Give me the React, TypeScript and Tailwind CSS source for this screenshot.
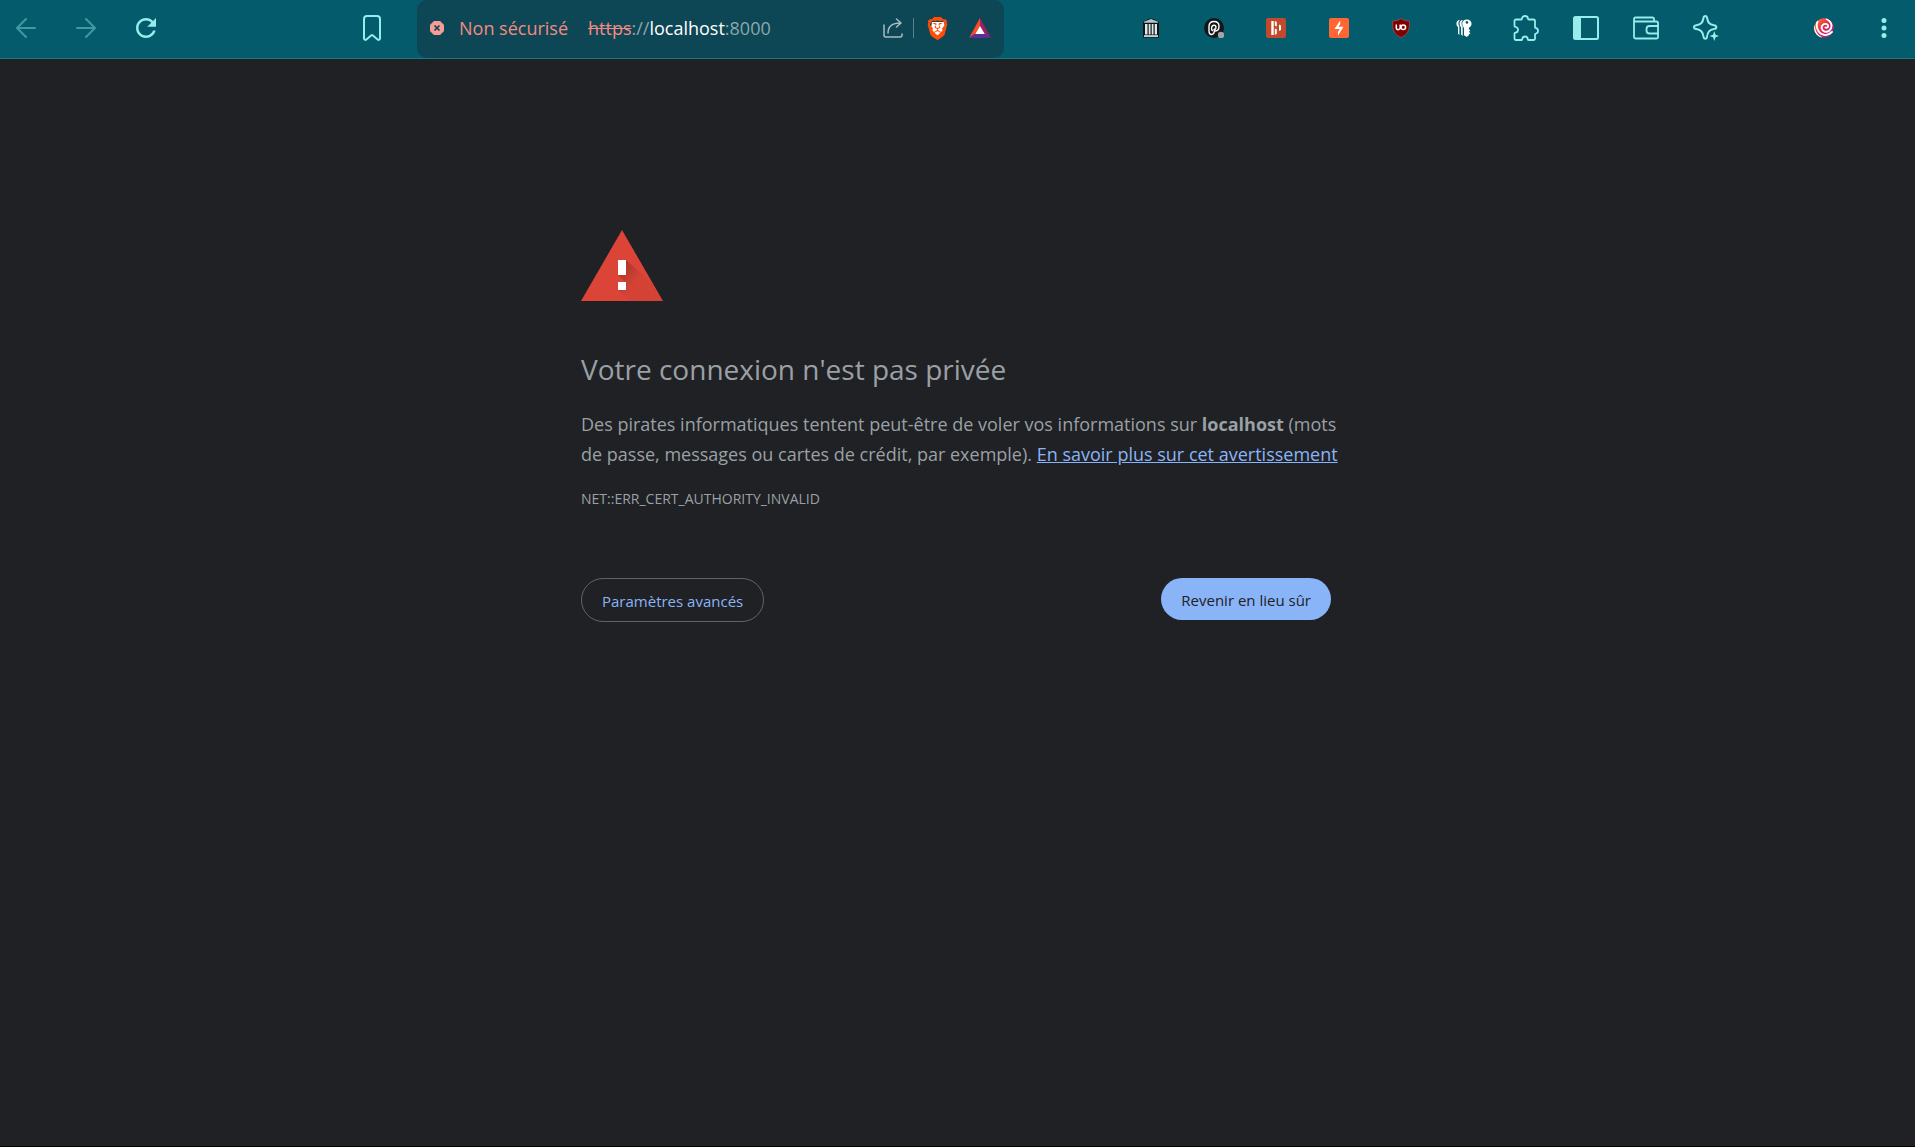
import type { ReactNode } from 'react';
import { SiBrave } from 'react-icons/si';

function ToolButton({ label, children, dim }: { label: string; children: ReactNode; dim?: boolean }) {
  return (
    <button
      type="button"
      aria-label={label}
      disabled={dim}
      className={
        dim
          ? 'flex h-10 w-[52px] shrink-0 items-center justify-center text-[#4199a4]'
          : 'flex h-10 w-[52px] shrink-0 items-center justify-center text-[#98ecec]'
      }
    >
      {children}
    </button>
  );
}

const line = {
  fill: 'none',
  stroke: 'currentColor',
  strokeWidth: 2,
  strokeLinecap: 'round',
  strokeLinejoin: 'round',
} as const;

const BackIcon = () => (
  <svg width="20" height="20" viewBox="0 0 20 20" {...line}>
    <path d="M19 10H1.500M10 1L1 10l9 9" />
  </svg>
);

const ForwardIcon = () => (
  <svg width="20" height="20" viewBox="0 0 20 20" {...line}>
    <path d="M1 10h17.500M10 1l9 9-9 9" />
  </svg>
);

const ReloadIcon = () => (
  <svg width="20" height="20" viewBox="4 4 16 16" fill="currentColor">
    <path d="M17.650 6.350C16.200 4.900 14.210 4 12 4c-4.420 0-7.990 3.580-7.990 8s3.570 8 7.990 8c3.730 0 6.840-2.550 7.730-6h-2.080c-.82 2.330-3.040 4-5.650 4-3.310 0-6-2.690-6-6s2.690-6 6-6c1.660 0 3.140.69 4.220 1.780L13 11h7V4l-2.350 2.350z" />
  </svg>
);

const BookmarkIcon = () => (
  <svg width="18" height="26" viewBox="0 0 18 26" {...line}>
    <path d="M4 1h10a3 3 0 0 1 3 3v19.300c0 1.400-1.300 2-2.400 1.200L9.600 20.300a1 1 0 0 0-1.200 0L3.400 24.500C2.300 25.300 1 24.700 1 23.300V4a3 3 0 0 1 3-3z" />
  </svg>
);

const DangerIcon = () => (
  <svg width="14" height="14" viewBox="0 0 14 14">
    <path d="M4.200 0h5.600L14 4.200v5.600L9.800 14H4.200L0 9.800V4.200z" fill="#f69d97" stroke="#f69d97" strokeLinejoin="round" strokeWidth="0.5" />
    <path d="M4.500 4.500l5 5M9.500 4.500l-5 5" stroke="#0d4655" strokeWidth="1.700" />
  </svg>
);

const ShareIcon = () => (
  <svg width="20" height="20" viewBox="0 0 20 20" fill="none" stroke="#a9bcc0" strokeWidth="1.500" strokeLinecap="round" strokeLinejoin="round">
    <path d="M1 7v10a2 2 0 0 0 2 2h14a2 2 0 0 0 2-2v-1" />
    <path d="M5 15C5 9 9 5 17.500 5M13.500 1l4.500 4-4.500 4" />
  </svg>
);

const BraveIcon = () => (
  <span className="grid place-items-center">
    <svg className="col-start-1 row-start-1" width="16" height="18" viewBox="0 0 16 18">
      <path d="M2 3l12 0 1 6-3 6-4 2.500L4 15 1 9z" fill="#fff" />
    </svg>
    <SiBrave className="col-start-1 row-start-1" size={23} color="#ff4d06" />
  </span>
);

const BatIcon = () => (
  <svg width="22" height="20" viewBox="0 0 22 20">
    <path d="M11 0v8.500L6 16l-6 4z" fill="#ff4a22" />
    <path d="M11 0l11 20-6-4-5-7.500z" fill="#9e1f63" />
    <path d="M0 20l6-4.500h10L22 20z" fill="#5d2f92" />
    <path d="M11 8l4.800 8H6.200z" fill="#fff" />
  </svg>
);

const MuseumIcon = () => (
  <svg width="18" height="20" viewBox="0 0 18 20">
    <path d="M1 4L6 1.200Q9 0 12 1.200L17 4v15.500H1z" fill="#0b1417" />
    <path d="M2 3.800L9 1l7 2.800v1H2z" fill="#b9c6c9" />
    <path d="M3 6h2.500v10.500H3zM6.700 6h1.800v10.500H6.700zM9.700 6h1.800v10.500H9.700zM12.700 6H15v10.500h-2.300z" fill="#dfe7e8" />
    <path d="M2 17.300h14v1.500H2z" fill="#fff" />
  </svg>
);

const SpiralIcon = () => (
  <svg width="20" height="20" viewBox="0 0 20 20">
    <circle cx="10" cy="10" r="10" fill="#14171a" />
    <path
      d="M8.500 12.500c-1.600-.8-1.300-5.300 1.500-5.300 2.600 0 2.600 4.300 0 4.300M10.500 11.500c0 3.500-1.300 5-3 5S5 15 5 12.500V8.500C5 5.500 7 3.500 10 3.500s5 2 5 4.800-1.600 4.700-3.700 4.700"
      fill="none"
      stroke="#fff"
      strokeWidth="1.400"
      strokeLinecap="round"
    />
    <circle cx="17" cy="17" r="3.200" fill="#a3a3a8" />
  </svg>
);

const BarsIcon = () => (
  <svg width="20" height="20" viewBox="0 0 20 20">
    <rect width="20" height="20" rx="2" fill="#c14a2b" />
    <path d="M5.300 3h2.400v14H5.300zM8.800 3l2 1v4.500l-2-.8zM8.800 10.500l2 .8v4.500l-2 1.200zM13 6.500l2 1v4.500l-2 1z" fill="#fff" />
  </svg>
);

const BoltIcon = () => (
  <svg width="20" height="20" viewBox="0 0 20 20">
    <rect width="20" height="20" rx="2" fill="#ff6633" />
    <path d="M11.200 2.500V6L9.500 8.800h5L9 17.500V14l1.700-3H5.500z" fill="#fff" />
  </svg>
);

const ShieldIcon = () => (
  <svg width="20" height="20" viewBox="0 0 20 20">
    <path d="M10 .5c2.500 1.800 5.300 2.500 8.500 2.700 0 7.800-.8 13-8.500 16.300C2.300 16.200 1.500 11 1.500 3.200 4.700 3 7.500 2.300 10 .5z" fill="#800000" stroke="#b45a5a" strokeWidth="0.600" />
    <path d="M5.300 6.500v3.200a1.900 1.900 0 0 0 3.900 0V6.500v3.200" fill="none" stroke="#fff" strokeWidth="1.500" />
    <circle cx="12.300" cy="9.200" r="2.300" fill="none" stroke="#fff" strokeWidth="1.500" />
  </svg>
);

const KeysIcon = () => (
  <svg width="16" height="18" viewBox="0 0 18 20" fill="#fff">
    <path d="M4.500 1C1.500 1 .5 3 .5 5.200c0 2 .8 3 1.800 3.700v7.600l1.500 1.500V8C2.500 6.500 2 3.500 4.500 1z" />
    <path d="M8 1C5 1 4 3 4 5.200c0 2 .8 3 1.700 3.700v8.300L7.500 19V8.500C6 6.500 5.500 3.500 8 1z" />
    <path
      fillRule="evenodd"
      d="M12.200.5c3 0 5.300 2 5.300 4.700 0 2.200-1.300 3.700-3 4.400v1.700l1.700 1.500-1.700 1.300 1.700 1.700-1.700 1.500v.9L12.200 20l-3.200-1.800V9.600C8 8.900 7 7.200 7 5.200 7 2.500 9.200.5 12.200.5zm.1 1.700a1.500 1.500 0 1 0 0 3 1.500 1.500 0 0 0 0-3z"
    />
  </svg>
);

const PuzzleIcon = () => (
  <svg width="26" height="26" viewBox="0 0 26 26" {...line} strokeWidth={1.8}>
    <path d="M3 4.500h5.200c.5 0 .8-.3.800-.8C9 2.200 10.300 1 12 1s3 1.200 3 2.700c0 .5.3.8.800.8h4.700a1.500 1.500 0 0 1 1.500 1.500v6.200c0 .5.300.8.800.8 1.300.2 2.200 1.400 2.200 2.800s-.9 2.600-2.200 2.800c-.5 0-.8.300-.8.800V23.500a1.500 1.500 0 0 1-1.500 1.500h-5c-.5 0-.8-.3-.8-.8 0-1.600-1-2.700-2.700-2.700s-2.700 1.100-2.700 2.700c0 .5-.3.800-.8.800H3a1.500 1.500 0 0 1-1.500-1.500v-5c0-.5.3-.8.800-.8 1.600-.2 2.700-1.300 2.700-2.900s-1.100-2.700-2.700-2.900c-.5 0-.8-.3-.8-.8V6A1.500 1.500 0 0 1 3 4.500z" />
  </svg>
);

const PanelIcon = () => (
  <svg width="26" height="24" viewBox="0 0 26 24" {...line}>
    <rect x="1" y="1" width="24" height="22" rx="1.500" />
    <path d="M1 1h7v22H1z" fill="currentColor" stroke="none" />
  </svg>
);

const WalletIcon = () => (
  <svg width="26" height="24" viewBox="0 0 26 24" {...line} strokeWidth={1.8}>
    <path d="M21 5V3a1.500 1.500 0 0 0-1.500-1.500h-17A1.500 1.500 0 0 0 1 3v18a1.500 1.500 0 0 0 1.500 1.500h21A1.500 1.500 0 0 0 25 21V7a1.500 1.500 0 0 0-1.500-1.500H2.500A1.500 1.500 0 0 1 1 4" />
    <path d="M25 10h-8.500a3 3 0 0 0-3 3v1.500a3 3 0 0 0 3 3H25" />
  </svg>
);

const SparkleIcon = () => (
  <svg width="26" height="26" viewBox="0 0 26 26" {...line}>
    <path d="M12.300 1c-1.200 0-1.600.8-1.800 2-.8 4.500-2.200 6.300-7.200 7.300-1.300.2-2.300.7-2.300 1.900s1 1.700 2.300 1.900c5 1 6.400 2.800 7.200 7.500.2 1.200.6 2.200 1.800 2.200s1.600-1 1.800-2.200c.8-4.700 2-6.500 7-7.500 1.200-.2 2.200-.7 2.200-1.900s-1-1.700-2.200-1.900c-5-1-6.200-2.800-7-7.300-.2-1.200-.6-2-1.800-2z" />
    <path d="M21.300 16l1.300 3.700 3.700 1.300-3.700 1.300-1.300 3.700-1.300-3.700-3.700-1.300 3.700-1.300z" fill="currentColor" stroke="#035b6c" strokeWidth="2.500" paintOrder="stroke" />
  </svg>
);

const ProfileIcon = () => (
  <svg width="20" height="20" viewBox="0 0 20 20">
    <defs>
      <linearGradient id="swirl" x1="0" y1="0" x2="1" y2="1">
        <stop offset="0" stopColor="#ff8a2a" />
        <stop offset="0.500" stopColor="#e2264f" />
        <stop offset="1" stopColor="#8a1fa8" />
      </linearGradient>
      <clipPath id="ball">
        <circle cx="10" cy="10" r="10" />
      </clipPath>
    </defs>
    <g clipPath="url(#ball)">
      <circle cx="10" cy="10" r="10" fill="url(#swirl)" />
      <path
        d="M11.500 9.500c1.200.8 3-.2 2.600-1.800-.5-2-3.600-2.500-5.300-.8-2 2-1.300 5.600 1.700 6.600 3.500 1 7-1.500 7-5.500 0-3-2-5.500-5-7M3.500 3.500C1.500 8 3.500 15.500 10 16.800c3.500.6 6-.8 8-2.800M0 8c0 5 3 9.500 7 11.500"
        fill="none"
        stroke="#fff"
        strokeWidth="1.900"
        strokeLinecap="round"
      />
    </g>
  </svg>
);

const MenuIcon = () => (
  <svg width="6" height="20" viewBox="0 0 6 20" fill="currentColor">
    <circle cx="3" cy="2.500" r="2.500" />
    <circle cx="3" cy="10" r="2.500" />
    <circle cx="3" cy="17.500" r="2.500" />
  </svg>
);

const WarningIcon = () => (
  <svg width="82" height="71" viewBox="0 0 82 71" role="img" aria-label="Avertissement">
    <defs>
      <linearGradient id="shade" gradientUnits="userSpaceOnUse" x1="40" y1="40" x2="60" y2="58">
        <stop offset="0" stopColor="#000" stopOpacity="0.200" />
        <stop offset="0.700" stopColor="#000" stopOpacity="0.030" />
      </linearGradient>
    </defs>
    <path d="M41 0l41 71H0z" fill="#db4437" />
    <path d="M45 30l27 24 10 17H49L37 60l8-7-8-8z" fill="url(#shade)" />
    <path d="M37 30h8v15h-8zM37 52h8v8h-8z" fill="#fff" />
  </svg>
);

function Toolbar() {
  return (
    <header className="grid h-[59px] grid-cols-[417fr_587fr_911fr] border-b border-[#1c7886] bg-[#035b6c]">
      <nav aria-label="Navigation" className="flex items-center gap-2 pr-[19px] pb-0.5">
        <ToolButton label="Précédent" dim><BackIcon /></ToolButton>
        <ToolButton label="Suivant" dim><ForwardIcon /></ToolButton>
        <ToolButton label="Actualiser"><ReloadIcon /></ToolButton>
        <span className="grow" />
        <ToolButton label="Ajouter aux favoris"><BookmarkIcon /></ToolButton>
      </nav>

      <div className="flex items-center rounded-[10px] bg-[#0d4655] pr-[13px] pb-0.5 pl-[13px] text-lg whitespace-nowrap">
        <button type="button" className="flex items-center gap-[15px] text-[#f28b82]">
          <DangerIcon />
          Non sécurisé
        </button>
        <div role="textbox" aria-label="Adresse" className="ml-5 grow text-[#8aa9ae]">
          <span className="text-[#f28b82] line-through">https</span>://<span className="text-white">localhost</span>:8000
        </div>
        <button type="button" aria-label="Partager"><ShareIcon /></button>
        <span className="ml-2.5 h-5 w-px bg-[#5d8189]" />
        <button type="button" aria-label="Boucliers Brave" className="ml-3"><BraveIcon /></button>
        <button type="button" aria-label="Brave Rewards" className="ml-5"><BatIcon /></button>
      </div>

      <div className="flex items-center justify-end gap-2 pr-[5px] pb-0.5">
        <div className="mr-0.5 flex w-[365px] justify-between">
          <ToolButton label="Archives"><MuseumIcon /></ToolButton>
          <ToolButton label="Spirale"><SpiralIcon /></ToolButton>
          <ToolButton label="Barres"><BarsIcon /></ToolButton>
          <ToolButton label="Éclair"><BoltIcon /></ToolButton>
          <ToolButton label="Bloqueur"><ShieldIcon /></ToolButton>
          <ToolButton label="Clés"><KeysIcon /></ToolButton>
        </div>
        <ToolButton label="Extensions"><PuzzleIcon /></ToolButton>
        <ToolButton label="Panneau latéral"><PanelIcon /></ToolButton>
        <ToolButton label="Portefeuille"><WalletIcon /></ToolButton>
        <ToolButton label="Assistant"><SparkleIcon /></ToolButton>
        <span className="w-[50px]" />
        <ToolButton label="Profil"><ProfileIcon /></ToolButton>
        <ToolButton label="Menu"><MenuIcon /></ToolButton>
      </div>
    </header>
  );
}

export default function App() {
  return (
    <div className="flex min-h-screen flex-col border-b border-black bg-[#202124] font-['Segoe_UI','Open_Sans',sans-serif]">
      <Toolbar />
      <main className="mx-auto w-full max-w-[753px] pt-[171px] pr-[3px] text-[#9aa0a6]">
        <WarningIcon />
        <h1 className="mt-12 text-[28px] leading-10">Votre connexion n'est pas privée</h1>
        <p className="-mr-4 mt-5 text-lg leading-[30px]">
          Des pirates informatiques tentent peut-être de voler vos informations sur <strong>localhost</strong> (mots
          <br />
          de passe, messages ou cartes de crédit, par exemple).{' '}
          <a href="#" className="text-[#8ab4f8] underline">En savoir plus sur cet avertissement</a>
        </p>
        <p className="mt-4 text-sm leading-7">NET::ERR_CERT_AUTHORITY_INVALID</p>
        <div className="mt-[65px] flex items-start justify-between text-[15px]">
          <button type="button" className="h-11 rounded-[22px] border border-[#5f6368] px-5 pt-0.5 text-[#8ab4f8]">
            Paramètres avancés
          </button>
          <button type="button" className="h-[42px] rounded-[21px] bg-[#8ab4f8] px-5 pt-0.5 text-[#202124]">
            Revenir en lieu sûr
          </button>
        </div>
      </main>
    </div>
  );
}
